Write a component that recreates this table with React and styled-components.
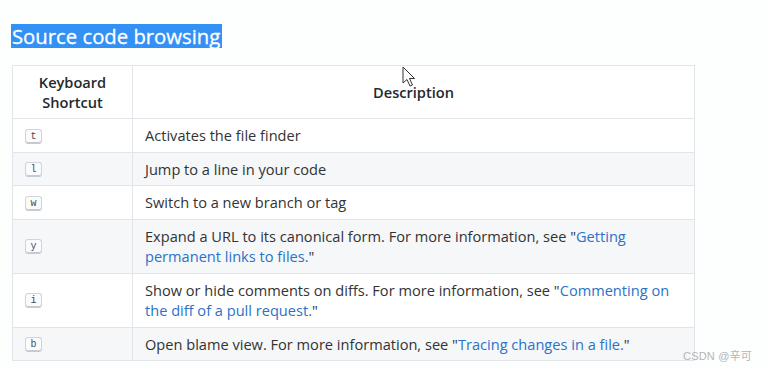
import React from "react";
import styled, { createGlobalStyle } from "styled-components";

const Global = createGlobalStyle`
  html, body { margin: 0; padding: 0; background: #fdfefe; }
  body { font-family: "Open Sans", "Noto Sans CJK SC", sans-serif; color: #333; }
`;

const Page = styled.div`
  position: relative;
  width: 767px;
  height: 369px;
  overflow: hidden;
  padding: 24px 0 0 12px;
  box-sizing: border-box;
`;

const Heading = styled.h2`
  margin: 0 0 0 -1px;
  width: fit-content;
  font-size: 20.3px;
  line-height: 24px;
  font-weight: 400;
  -webkit-text-stroke: 0.3px #fff;
  color: #fff;
  background: #3390f5;
  padding: 0 2px 0 1px;
`;

const Table = styled.table`
  margin-top: 17px;
  border-collapse: collapse;
  width: 683px;
  font-size: 14.6px;
  background: #fff;
`;

const Th = styled.th`
  border: 1px solid #e1e4e8;
  padding: 6px 13px;
  font-weight: 600;
  color: #24292e;
  text-align: center;
  line-height: 20px;
  height: 39px;
  width: ${(p) => p.$w || "auto"};
`;

const Row = styled.tr`
  background: ${(p) => (p.$alt ? "#f5f7f9" : "#fff")};
`;

const Td = styled.td`
  border: 1px solid #e1e4e8;
  padding: 6px 13px 6px 12px;
  line-height: 20.5px;
  color: #333;
  vertical-align: middle;
`;

const Kbd = styled.kbd`
  display: inline-block;
  box-sizing: border-box;
  min-width: 17px;
  height: 15px;
  padding: 0 4px;
  font: 10px/13px "Liberation Mono", monospace;
  color: #444d56;
  text-align: center;
  background: #fafbfc;
  border: 1px solid #d1d5da;
  border-bottom-color: #c6cbd1;
  border-radius: 3px;
  box-shadow: inset 0 -1px 0 #c6cbd1;
  vertical-align: middle;
  margin: -2px 0 0 0;
`;

const Link = styled.a`
  color: #2b72c8;
  text-decoration: none;
`;

const Cursor = styled.svg`
  position: absolute;
  left: 402px;
  top: 66px;
`;

const Watermark = styled.div`
  position: absolute;
  left: 683px;
  top: 347px;
  font-size: 11px;
  color: #b5b5b5;
  font-family: "Liberation Sans", "Noto Sans CJK SC", sans-serif;
  letter-spacing: 0.2px;
`;

const rows = [
  { k: "t", d: "Activates the file finder" },
  { k: "l", d: "Jump to a line in your code" },
  { k: "w", d: "Switch to a new branch or tag" },
  {
    k: "y",
    d: "Expand a URL to its canonical form. For more information, see \"",
    l: "Getting permanent links to files.",
    e: "\"",
  },
  {
    k: "i",
    d: "Show or hide comments on diffs. For more information, see \"",
    l: "Commenting on the diff of a pull request.",
    e: "\"",
  },
  {
    k: "b",
    d: "Open blame view. For more information, see \"",
    l: "Tracing changes in a file.",
    e: "\"",
  },
];

export default function App() {
  return (
    <>
      <Global />
      <Page>
        <Heading>Source code browsing</Heading>
        <Table>
          <thead>
            <tr>
              <Th $w="93px">Keyboard Shortcut</Th>
              <Th>Description</Th>
            </tr>
          </thead>
          <tbody>
            {rows.map((r, i) => (
              <Row key={r.k} $alt={i % 2 === 1}>
                <Td>
                  <Kbd>{r.k}</Kbd>
                </Td>
                <Td>
                  {r.d}
                  {r.l && <Link href="#">{r.l}</Link>}
                  {r.e}
                </Td>
              </Row>
            ))}
          </tbody>
        </Table>
        <Cursor width="14" height="22" viewBox="0 0 14 22">
          <path d="M1 1 L1 17 L5 13.5 L8 20 L10.5 19 L7.5 12.5 L12.5 12.5 Z" fill="#fff" stroke="#333" strokeWidth="1" strokeLinejoin="round" />
        </Cursor>
        <Watermark>CSDN @辛可</Watermark>
      </Page>
    </>
  );
}
